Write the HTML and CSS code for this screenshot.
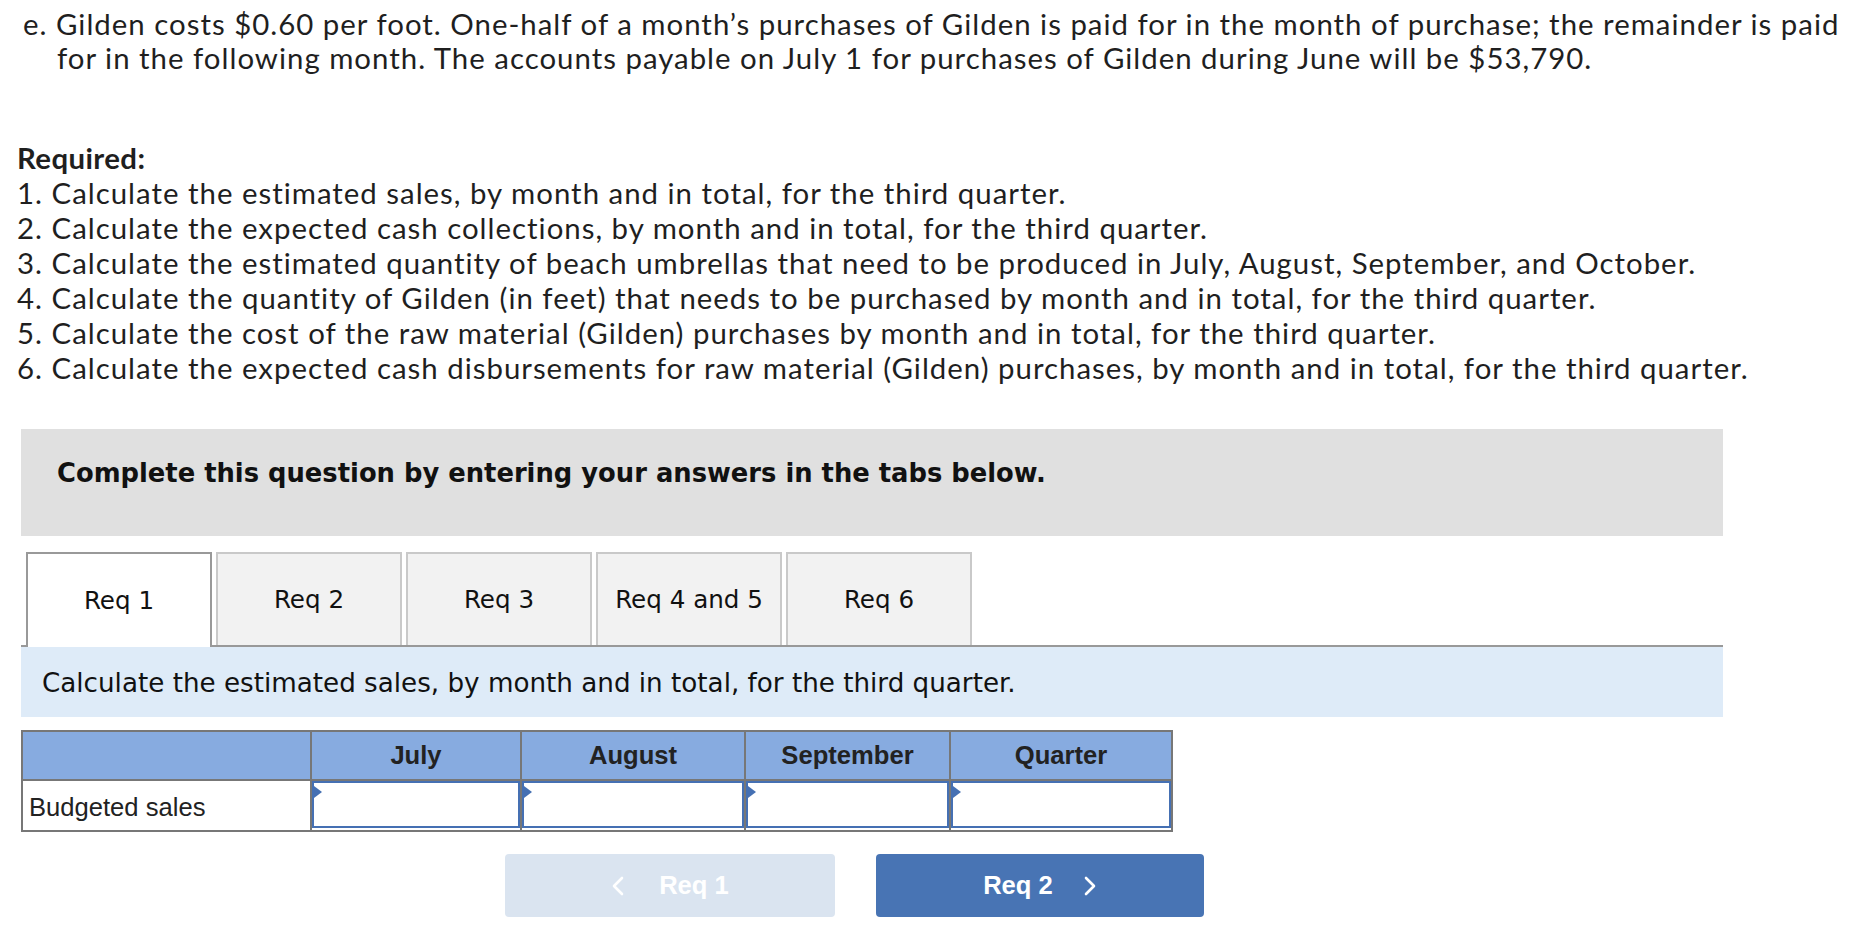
FILE: index.html
```html
<!DOCTYPE html>
<html lang="en">
<head>
<meta charset="utf-8">
<title>Gilden budget question</title>
<link rel="stylesheet" href="styles.css">
</head>
<body>
<div class="page">
  <p class="intro">e. Gilden costs $0.60 per foot. One-half of a month’s purchases of Gilden is paid for in the month of purchase; the remainder is paid<br>for in the following month. The accounts payable on July 1 for purchases of Gilden during June will be $53,790.</p>

  <div class="required">
    <div class="req-title">Required:</div>
    <div class="req-line">1. Calculate the estimated sales, by month and in total, for the third quarter.</div>
    <div class="req-line">2. Calculate the expected cash collections, by month and in total, for the third quarter.</div>
    <div class="req-line">3. Calculate the estimated quantity of beach umbrellas that need to be produced in July, August, September, and October.</div>
    <div class="req-line">4. Calculate the quantity of Gilden (in feet) that needs to be purchased by month and in total, for the third quarter.</div>
    <div class="req-line">5. Calculate the cost of the raw material (Gilden) purchases by month and in total, for the third quarter.</div>
    <div class="req-line">6. Calculate the expected cash disbursements for raw material (Gilden) purchases, by month and in total, for the third quarter.</div>
  </div>

  <div class="question">
    <div class="instr">Complete this question by entering your answers in the tabs below.</div>

    <div class="tabs">
      <div class="tab active">Req 1</div>
      <div class="tab">Req 2</div>
      <div class="tab">Req 3</div>
      <div class="tab">Req 4 and 5</div>
      <div class="tab">Req 6</div>
    </div>

    <div class="band">Calculate the estimated sales, by month and in total, for the third quarter.</div>

    <table class="grid">
      <colgroup>
        <col class="c-label">
        <col class="c-july">
        <col class="c-aug">
        <col class="c-sep">
        <col class="c-qtr">
      </colgroup>
      <thead>
        <tr>
          <th></th>
          <th>July</th>
          <th>August</th>
          <th>September</th>
          <th>Quarter</th>
        </tr>
      </thead>
      <tbody>
        <tr>
          <td class="label">Budgeted sales</td>
          <td class="cell"><div class="inp"></div></td>
          <td class="cell"><div class="inp"></div></td>
          <td class="cell"><div class="inp"></div></td>
          <td class="cell"><div class="inp"></div></td>
        </tr>
      </tbody>
    </table>

    <div class="nav">
      <div class="btn prev">
        <svg class="chev" width="14" height="22" viewBox="0 0 14 22"><polyline points="11,3 3,11 11,19" fill="none" stroke="#ffffff" stroke-width="2.6" stroke-linecap="round" stroke-linejoin="round"/></svg>
        <span>Req 1</span>
      </div>
      <div class="btn next">
        <span>Req 2</span>
        <svg class="chev" width="14" height="22" viewBox="0 0 14 22"><polyline points="3,3 11,11 3,19" fill="none" stroke="#ffffff" stroke-width="2.6" stroke-linecap="round" stroke-linejoin="round"/></svg>
      </div>
    </div>
  </div>
</div>
</body>
</html>
```

FILE: styles.css
```css
* { box-sizing: border-box; }

body {
  margin: 0;
  background: #ffffff;
  color: #1f1f1f;
  font-family: Lato, "Liberation Sans", sans-serif;
}

.page {
  width: 1864px;
}

.intro {
  margin: 0;
  padding: 7px 0 0 57px;
  text-indent: -34px;
  font-size: 29.4px;
  letter-spacing: 1px;
  line-height: 34px;
  white-space: nowrap;
}

.required {
  margin-top: 65px;
  padding-left: 17px;
  font-size: 29.4px;
  letter-spacing: 1px;
  line-height: 35px;
  white-space: nowrap;
}

.req-title {
  font-weight: bold;
  letter-spacing: 0.4px;
}

.question {
  margin: 44px 0 0 21px;
  width: 1702px;
}

.instr {
  height: 107px;
  padding: 29px 0 0 36px;
  background: #e0e0e0;
  font-family: "DejaVu Sans", Verdana, sans-serif;
  font-weight: bold;
  font-size: 25.8px;
  line-height: 30px;
  color: #111111;
}

.tabs {
  margin-top: 16px;
  height: 95px;
  padding-left: 5px;
  display: flex;
  align-items: flex-end;
  gap: 4px;
  border-bottom: 2px solid #999999;
}

.tab {
  width: 186px;
  height: 93px;
  border: 2px solid #c9c9c9;
  border-bottom: none;
  background: #f2f2f2;
  display: flex;
  align-items: center;
  justify-content: center;
  font-family: "DejaVu Sans", Verdana, sans-serif;
  font-size: 24.6px;
  color: #111111;
}

.tab.active {
  height: 95px;
  margin-bottom: -2px;
  border-color: #999999;
  background: #ffffff;
}

.band {
  height: 70px;
  padding: 20px 0 0 21px;
  background: #deebf8;
  font-family: "DejaVu Sans", Verdana, sans-serif;
  font-size: 26.2px;
  line-height: 32px;
  color: #111111;
}

.grid {
  margin-top: 13px;
  border-collapse: collapse;
  border: 2px solid #777777;
  font-family: "Liberation Sans", Arial, sans-serif;
  font-size: 25.6px;
  color: #222222;
}

.c-label { width: 289px; }
.c-july { width: 210px; }
.c-aug { width: 224px; }
.c-sep { width: 205px; }
.c-qtr { width: 222px; }

.grid th {
  height: 49px;
  padding: 0;
  background: #87abe0;
  border: 2px solid #777777;
  font-weight: bold;
  text-align: center;
  vertical-align: middle;
}

.grid td {
  height: 51px;
  padding: 0;
  border: 2px solid #777777;
  background: #ffffff;
}

.grid td.label {
  padding: 3px 0 0 6px;
  vertical-align: middle;
}

.grid td.cell {
  vertical-align: top;
}

.inp {
  position: relative;
  height: 47px;
  border: 2px solid #4570b3;
  background: #ffffff;
}

.inp::before {
  content: "";
  position: absolute;
  left: 0;
  top: 3px;
  border-style: solid;
  border-width: 6px 0 6px 8px;
  border-color: transparent transparent transparent #4570b3;
}

.nav {
  margin: 22px 0 0 484px;
  display: flex;
  gap: 41px;
}

.btn {
  height: 63px;
  border-radius: 4px;
  display: flex;
  align-items: center;
  justify-content: center;
  font-family: "Liberation Sans", Arial, sans-serif;
  font-weight: bold;
  font-size: 25.6px;
  color: #ffffff;
}

.btn.prev {
  width: 330px;
  gap: 34px;
  background: #dae4f0;
}

.btn.next {
  width: 328px;
  gap: 30px;
  background: #4874b4;
}

.chev {
  display: block;
}
```
